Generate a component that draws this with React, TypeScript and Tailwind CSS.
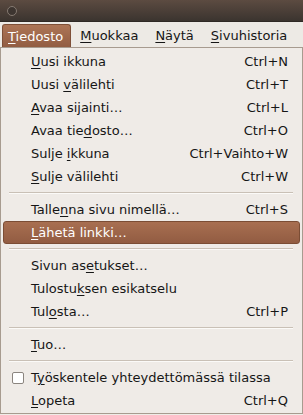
import { Fragment } from "react";

type Entry =
  | { kind: "item"; label: string; at: number; shortcut?: string; active?: boolean; check?: boolean }
  | { kind: "sep" };

const menubar = ["Tiedosto", "Muokkaa", "Näytä", "Sivuhistoria"];

const entries: Entry[] = [
  { kind: "item", label: "Uusi ikkuna", at: 0, shortcut: "Ctrl+N" },
  { kind: "item", label: "Uusi välilehti", at: 5, shortcut: "Ctrl+T" },
  { kind: "item", label: "Avaa sijainti…", at: 0, shortcut: "Ctrl+L" },
  { kind: "item", label: "Avaa tiedosto…", at: 8, shortcut: "Ctrl+O" },
  { kind: "item", label: "Sulje ikkuna", at: 6, shortcut: "Ctrl+Vaihto+W" },
  { kind: "item", label: "Sulje välilehti", at: 0, shortcut: "Ctrl+W" },
  { kind: "sep" },
  { kind: "item", label: "Tallenna sivu nimellä…", at: 5, shortcut: "Ctrl+S" },
  { kind: "item", label: "Lähetä linkki…", at: 0, active: true },
  { kind: "sep" },
  { kind: "item", label: "Sivun asetukset…", at: 8 },
  { kind: "item", label: "Tulostuksen esikatselu", at: 7 },
  { kind: "item", label: "Tulosta…", at: 3, shortcut: "Ctrl+P" },
  { kind: "sep" },
  { kind: "item", label: "Tuo…", at: 0 },
  { kind: "sep" },
  { kind: "item", label: "Työskentele yhteydettömässä tilassa", at: 1, check: true },
  { kind: "item", label: "Lopeta", at: 0, shortcut: "Ctrl+Q" },
];

// underline the access key letter
function Mnemonic({ text, at }: { text: string; at: number }) {
  return (
    <span>
      {text.slice(0, at)}
      <span className="underline decoration-1 underline-offset-[2px]">{text[at]}</span>
      {text.slice(at + 1)}
    </span>
  );
}

export default function App() {
  return (
    <div
      className="w-[303px] h-[415px] overflow-hidden bg-[#efebe7] text-[13px] leading-none text-[#161616]"
      style={{ fontFamily: '"DejaVu Sans", "Liberation Sans", sans-serif' }}
    >
      {/* Title bar */}
      <div className="h-[22px] flex items-center pl-[7px] bg-gradient-to-b from-[#5c4b41] to-[#3b342f] border-b border-[#2f2925]">
        <div className="w-[10px] h-[10px] rounded-full border border-[#857a71] bg-[#3d3530]" />
      </div>

      {/* Menu bar */}
      <div className="h-[25px] flex items-end pl-[2px] gap-[1px] bg-[#edeae5]">
        {menubar.map((m, i) => (
          <div
            key={m}
            className={
              i === 0
                ? "h-[23px] flex items-center pl-[5px] pr-[7px] rounded-t-[3px] bg-gradient-to-b from-[#ad7556] to-[#925d43] text-white border border-b-0 border-[#7e5038]"
                : "h-[23px] flex items-center px-[8px]"
            }
          >
            <Mnemonic text={m} at={0} />
          </div>
        ))}
      </div>

      {/* Dropdown */}
      <div className="border border-[#a79b8f] bg-[#efebe7] px-[2px] pt-[2px] pb-[1px]">
        {entries.map((e, i) => {
          if (e.kind === "sep") {
            return (
              <div key={i} className="h-[10px] flex flex-col justify-center pl-[6px] pr-[7px]">
                <div className="h-px bg-[#c9c0b6]" />
                <div className="h-px bg-[#fbfaf8]" />
              </div>
            );
          }
          return (
            <Fragment key={i}>
              <div
                className={
                  e.active
                    ? "h-[23px] flex items-center pl-[27px] pr-[11px] rounded-[3px] border border-[#7b4d35] bg-gradient-to-b from-[#a86f51] to-[#925c42] text-white"
                    : "relative h-[23px] flex items-center pl-[28px] pr-[12px]"
                }
              >
                {e.check && (
                  <div className="absolute left-[9px] top-[6px] w-[12px] h-[12px] rounded-[2px] border border-[#8b857f] bg-white" />
                )}
                <Mnemonic text={e.label} at={e.at} />
                {e.shortcut && <span className="ml-auto">{e.shortcut}</span>}
              </div>
            </Fragment>
          );
        })}
      </div>
    </div>
  );
}
